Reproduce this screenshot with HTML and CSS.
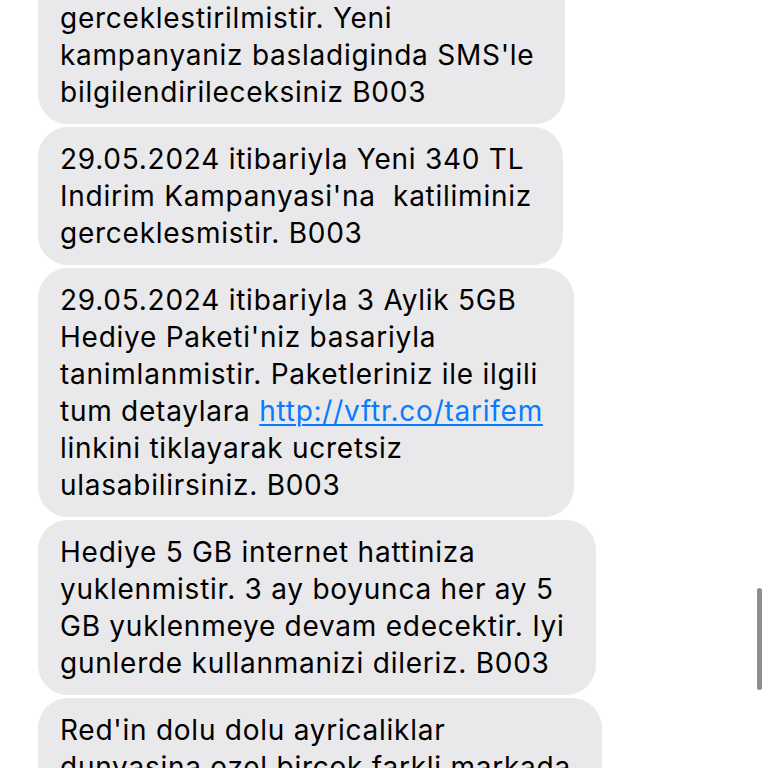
FILE: index.html
```html
<!DOCTYPE html>
<html lang="tr">
<head>
    <meta charset="UTF-8">
    <meta name="viewport" content="width=device-width, initial-scale=1.0">
    <title>Mesajlar</title>
    <link rel="stylesheet" href="styles.css">
</head>
<body>

<div class="thread">
    <div class="bubble cut">
        gerceklestirilmistir. Yeni<br>
        kampanyaniz basladiginda SMS'le<br>
        bilgilendirileceksiniz B003
    </div>

    <div class="bubble">
        29.05.2024 itibariyla Yeni 340 TL<br>
        Indirim Kampanyasi'na&nbsp; katiliminiz<br>
        gerceklesmistir. B003
    </div>

    <div class="bubble">
        29.05.2024 itibariyla 3 Aylik 5GB<br>
        Hediye Paketi'niz basariyla<br>
        tanimlanmistir. Paketleriniz ile ilgili<br>
        tum detaylara <a href="#">http://vftr.co/tarifem</a><br>
        linkini tiklayarak ucretsiz<br>
        ulasabilirsiniz. B003
    </div>

    <div class="bubble">
        Hediye 5 GB internet hattiniza<br>
        yuklenmistir. 3 ay boyunca her ay 5<br>
        GB yuklenmeye devam edecektir. Iyi<br>
        gunlerde kullanmanizi dileriz. B003
    </div>

    <div class="bubble">
        Red'in dolu dolu ayricaliklar<br>
        dunyasina ozel bircok farkli markada
    </div>
</div>

<!-- scroll indicator -->
<div class="scroll-thumb"></div>

</body>
</html>
```

FILE: styles.css
```css
body {
    margin: 0;
    background-color: #fff;
    font-family: Inter, "Noto Sans", sans-serif;
    overflow: hidden;
}

.thread {
    display: flex;
    flex-direction: column;
    align-items: flex-start;
    gap: 3px;
    padding-left: 38px;
}

.bubble {
    background-color: #e9e9eb;
    color: #000;
    font-size: 28px;
    line-height: 37px;
    letter-spacing: 0.75px;
    padding: 14px 31px 13px 22px;
    border-radius: 30px;
    white-space: nowrap;
}

.bubble.cut {
    padding-top: 0;
    border-top-left-radius: 0;
    border-top-right-radius: 0;
}

.bubble a {
    color: #0a7aff;
    text-decoration: underline;
    text-underline-offset: 3px;
    text-decoration-thickness: 2px;
}

.scroll-thumb {
    position: absolute;
    left: 757px;
    top: 588px;
    width: 5px;
    height: 102px;
    border-radius: 3px;
    background-color: #8e8e8e;
}
```
